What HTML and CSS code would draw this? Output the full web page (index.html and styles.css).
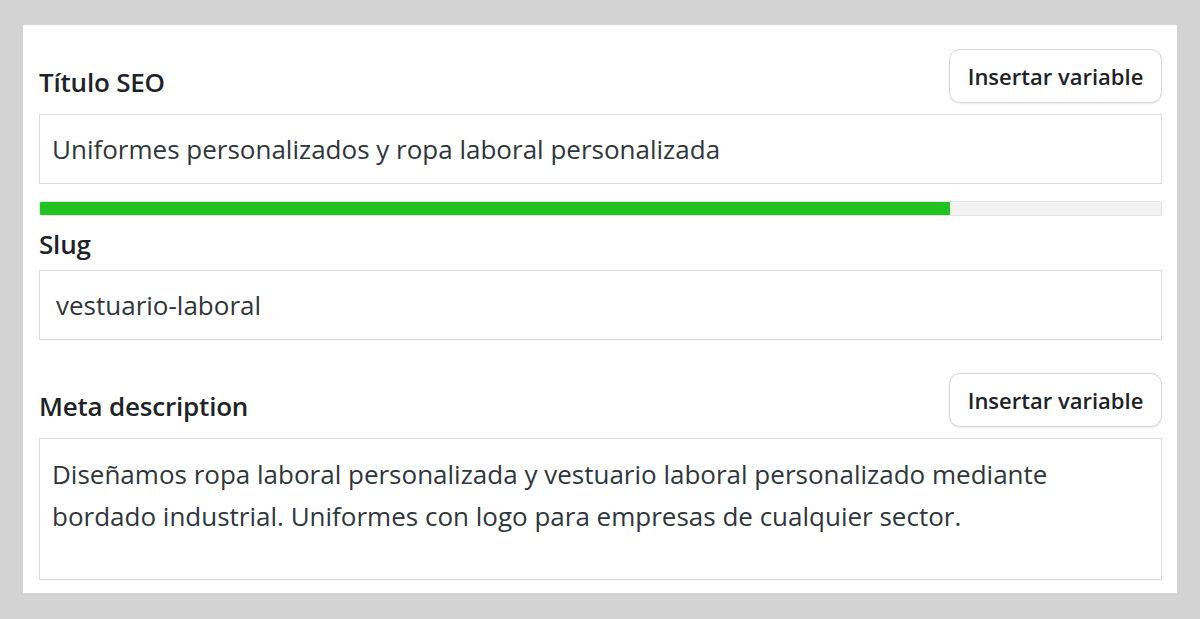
FILE: index.html
```html
<!DOCTYPE html>
<html lang="es">
<head>
<meta charset="utf-8">
<title>SEO</title>
<link rel="stylesheet" href="styles.css">
</head>
<body>
<div class="panel">
  <div class="field-head first">
    <label class="label">Título SEO</label>
    <button class="btn">Insertar variable</button>
  </div>
  <div class="input">Uniformes personalizados y ropa laboral personalizada</div>
  <div class="bar"><div class="bar-fill" style="width:81.2%"></div></div>
  <div class="label slug-label">Slug</div>
  <div class="input slug">vestuario-laboral</div>
  <div class="field-head meta">
    <label class="label">Meta description</label>
    <button class="btn">Insertar variable</button>
  </div>
  <div class="textarea">Diseñamos ropa laboral personalizada y vestuario laboral personalizado mediante bordado industrial. Uniformes con logo para empresas de cualquier sector.</div>
</div>
</body>
</html>
```

FILE: styles.css
```css
html, body {
  margin: 0;
  padding: 0;
}
body {
  background: #d3d3d3;
  font-family: "Open Sans", "Noto Sans", sans-serif;
  color: #1d2327;
}
.panel {
  margin: 25px 23px 0 23px;
  height: 568px;
  box-sizing: border-box;
  background: #ffffff;
  padding: 24px 15px 12px 16px;
}
.field-head {
  display: flex;
  justify-content: space-between;
  align-items: flex-end;
  height: 54px;
}
.label {
  font-size: 26px;
  font-weight: 600;
  color: #1d2327;
  line-height: 32px;
  display: block;
  letter-spacing: -0.2px;
}
.field-head .label {
  margin-bottom: 5px;
}
.btn {
  font-family: inherit;
  font-size: 22px;
  font-weight: 600;
  color: #1d2327;
  background: #ffffff;
  border: 1.5px solid #d5d7da;
  border-radius: 11px;
  box-shadow: 0 1px 2px rgba(0,0,0,0.08);
  height: 54px;
  width: 213px;
  padding: 0;
  align-self: flex-start;
}
.input {
  margin-top: 11px;
  height: 70px;
  box-sizing: border-box;
  border: 1.5px solid #dcdcde;
  padding: 0 12px;
  display: flex;
  align-items: center;
  font-size: 26px;
  color: #2f363c;
}
.bar {
  margin-top: 17px;
  height: 15px;
  box-sizing: border-box;
  background: #f2f2f2;
  border: 1px solid #e2e2e2;
  border-radius: 2px;
  overflow: hidden;
}
.bar-fill {
  height: 100%;
  background: #23c223;
}
.slug-label {
  margin-top: 12px;
}
.slug {
  margin-top: 10px;
  padding-left: 16px;
}
.meta {
  margin-top: 33px;
}
.textarea {
  margin-top: 11px;
  height: 142px;
  box-sizing: border-box;
  border: 1.5px solid #dcdcde;
  padding: 14px 12px;
  font-size: 26px;
  line-height: 42px;
  color: #2f363c;
}
```
